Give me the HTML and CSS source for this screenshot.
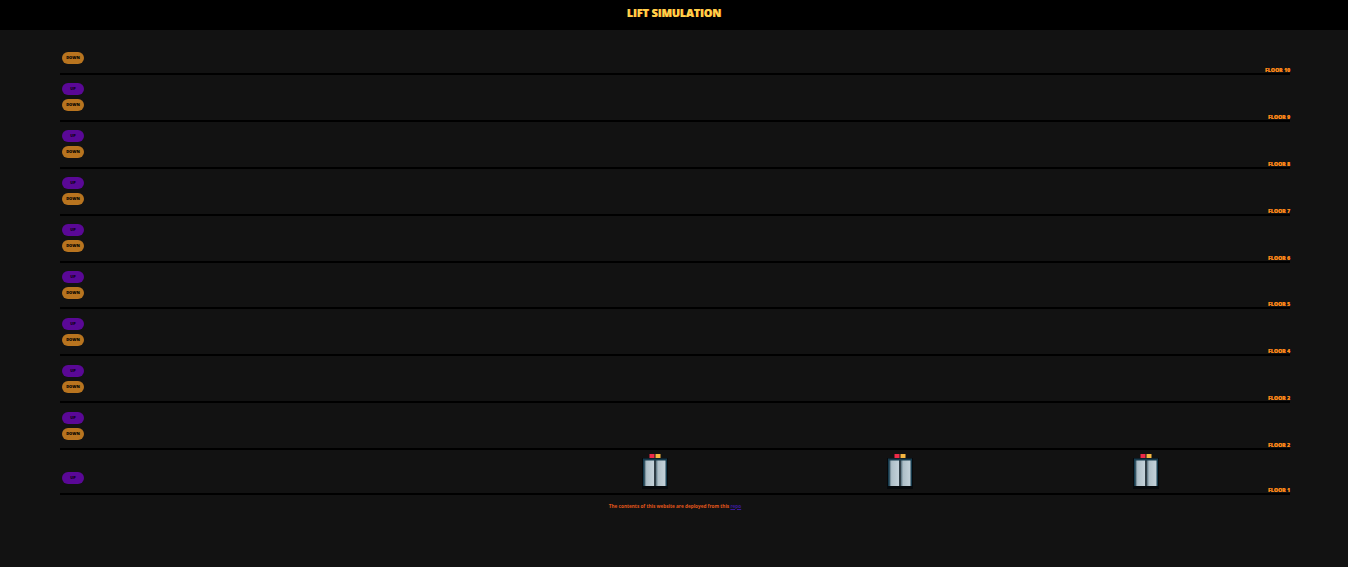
FILE: index.html
```html
<!DOCTYPE html>
<html lang="en">
<head>
<meta charset="utf-8">
<title>Lift Simulation</title>
<link rel="stylesheet" href="styles.css">
</head>
<body>
<header class="top"><h1 class="title">LIFT SIMULATION</h1></header>
<main class="building">
  <section class="floor floor-top">
    <div class="calls"><span class="slot"></span><button class="call down">DOWN</button></div>
    <span class="label">FLOOR 10</span>
  </section>
  <section class="floor">
    <div class="calls"><button class="call up">UP</button><button class="call down">DOWN</button></div>
    <span class="label">FLOOR 9</span>
  </section>
  <section class="floor">
    <div class="calls"><button class="call up">UP</button><button class="call down">DOWN</button></div>
    <span class="label">FLOOR 8</span>
  </section>
  <section class="floor">
    <div class="calls"><button class="call up">UP</button><button class="call down">DOWN</button></div>
    <span class="label">FLOOR 7</span>
  </section>
  <section class="floor">
    <div class="calls"><button class="call up">UP</button><button class="call down">DOWN</button></div>
    <span class="label">FLOOR 6</span>
  </section>
  <section class="floor">
    <div class="calls"><button class="call up">UP</button><button class="call down">DOWN</button></div>
    <span class="label">FLOOR 5</span>
  </section>
  <section class="floor">
    <div class="calls"><button class="call up">UP</button><button class="call down">DOWN</button></div>
    <span class="label">FLOOR 4</span>
  </section>
  <section class="floor">
    <div class="calls"><button class="call up">UP</button><button class="call down">DOWN</button></div>
    <span class="label">FLOOR 3</span>
  </section>
  <section class="floor">
    <div class="calls"><button class="call up">UP</button><button class="call down">DOWN</button></div>
    <span class="label">FLOOR 2</span>
  </section>
  <section class="floor floor-ground">
    <div class="calls"><span class="slot"></span><button class="call up">UP</button></div>
    <div class="lifts">
      <svg class="lift" viewBox="0 0 26 36"><use href="#lift-art"/></svg>
      <svg class="lift" viewBox="0 0 26 36"><use href="#lift-art"/></svg>
      <svg class="lift" viewBox="0 0 26 36"><use href="#lift-art"/></svg>
    </div>
    <span class="label">FLOOR 1</span>
  </section>
</main>
<footer class="foot">The contents of this website are deployed from this <a class="repo" href="#">repo</a></footer>
<svg class="defs" width="0" height="0" aria-hidden="true">
  <defs>
    <linearGradient id="door-left" x1="0" x2="1" y1="0" y2="0">
      <stop offset="0" stop-color="#566f7c"/>
      <stop offset="0.22" stop-color="#aebfc8"/>
      <stop offset="1" stop-color="#c4d2da"/>
    </linearGradient>
    <g id="lift-art">
      <rect x="7.5" y="0" width="5" height="4" fill="#ee2a48"/>
      <rect x="13.5" y="0" width="5" height="4" fill="#f5b640"/>
      <rect x="0" y="4" width="26" height="31" fill="#06090c"/>
      <rect x="1" y="4.5" width="24" height="27.5" fill="#163b4d"/>
      <rect x="2.5" y="6.5" width="9.5" height="25.5" fill="url(#door-left)"/>
      <rect x="14" y="6.5" width="9.5" height="25.5" fill="url(#door-left)"/>
      <rect x="12" y="6.5" width="2" height="25.5" fill="#2f3d46"/>
    </g>
  </defs>
</svg>
</body>
</html>
```
FILE: styles.css
```css
* { box-sizing: border-box; }
html, body { margin: 0; padding: 0; }
body {
  min-height: 567px;
  background: #121212;
  font-family: "Open Sans", "Liberation Sans", sans-serif;
}
.top {
  height: 30px;
  background: #000;
  display: flex;
  align-items: center;
  justify-content: center;
}
.title {
  margin: 0 0 4px;
  font-size: 10.7px;
  font-weight: 800;
  line-height: 1;
  color: #ffd24d;
  text-shadow: 0.5px 0 0 #e8801e;
}
.building {
  margin: -1.875px 58px 0 60px;
}
.floor {
  height: 46.875px;
  border-bottom: 2px solid #000;
  display: flex;
  align-items: stretch;
}
.floor-ground { height: 45px; }
.floor-top .calls { padding-bottom: 2px; }
.floor-ground .calls { padding-bottom: 3px; }
.calls {
  width: 24px;
  margin-left: 2px;
  display: flex;
  flex-direction: column;
  justify-content: center;
  gap: 4px;
}
.slot { height: 12px; }
.call {
  width: 22px;
  height: 12px;
  flex: none;
  padding: 0;
  border: 0;
  border-radius: 6px;
  font: 800 4px/12px "Open Sans", sans-serif;
  text-align: center;
}
.up { background: #5a0896; color: #0a0214; }
.down { background: #b8741f; color: #000; }
.label {
  margin-left: auto;
  align-self: flex-end;
  margin-bottom: -1px;
  font-size: 5.2px;
  font-weight: 800;
  line-height: 7px;
  color: #ff8a1c;
  text-shadow: 0.3px 0 0 #c9600f;
}
.lifts {
  margin-left: 555.5px;
  display: flex;
  gap: 219.7px;
  align-items: flex-start;
  padding-top: 4px;
}
.lift { width: 26px; height: 36px; display: block; }
.foot {
  margin-top: 7.6px;
  padding-left: 2px;
  text-align: center;
  font-size: 4.7px;
  font-weight: 700;
  line-height: 7px;
  color: #e0561b;
}
.repo { color: #3a1a9a; }
.defs { position: absolute; }
```
